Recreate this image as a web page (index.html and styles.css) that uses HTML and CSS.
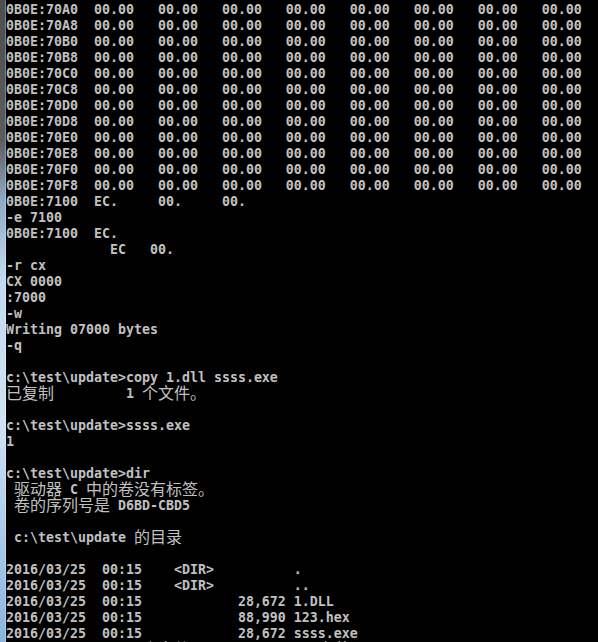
FILE: index.html
```html
<!DOCTYPE html>
<html lang="zh-CN">
<head>
<meta charset="utf-8">
<title>C:\Windows\system32\cmd.exe</title>
<link rel="stylesheet" href="styles.css">
</head>
<body>
<div class="window">
<div class="frame"></div>
<pre class="console">0B0E:70A0  00.00   00.00   00.00   00.00   00.00   00.00   00.00   00.00
0B0E:70A8  00.00   00.00   00.00   00.00   00.00   00.00   00.00   00.00
0B0E:70B0  00.00   00.00   00.00   00.00   00.00   00.00   00.00   00.00
0B0E:70B8  00.00   00.00   00.00   00.00   00.00   00.00   00.00   00.00
0B0E:70C0  00.00   00.00   00.00   00.00   00.00   00.00   00.00   00.00
0B0E:70C8  00.00   00.00   00.00   00.00   00.00   00.00   00.00   00.00
0B0E:70D0  00.00   00.00   00.00   00.00   00.00   00.00   00.00   00.00
0B0E:70D8  00.00   00.00   00.00   00.00   00.00   00.00   00.00   00.00
0B0E:70E0  00.00   00.00   00.00   00.00   00.00   00.00   00.00   00.00
0B0E:70E8  00.00   00.00   00.00   00.00   00.00   00.00   00.00   00.00
0B0E:70F0  00.00   00.00   00.00   00.00   00.00   00.00   00.00   00.00
0B0E:70F8  00.00   00.00   00.00   00.00   00.00   00.00   00.00   00.00
0B0E:7100  EC.     00.     00.
-e 7100
0B0E:7100  EC.
             EC   00.
-r cx
CX 0000
:7000
-w
Writing 07000 bytes
-q

c:\test\update&gt;copy 1.dll ssss.exe
<span class="cjk">已复制</span>         1 <span class="cjk">个文件。</span>

c:\test\update&gt;ssss.exe
1

c:\test\update&gt;dir
 <span class="cjk">驱动器</span> C <span class="cjk">中的卷没有标签。</span>
 <span class="cjk">卷的序列号是</span> D6BD-CBD5

 c:\test\update <span class="cjk">的目录</span>

2016/03/25  00:15    &lt;DIR&gt;          .
2016/03/25  00:15    &lt;DIR&gt;          ..
2016/03/25  00:15            28,672 1.DLL
2016/03/25  00:15            88,990 123.hex
2016/03/25  00:15            28,672 ssss.exe
               3 <span class="cjk">个文件</span>        146,334 <span class="cjk">字节</span>
</pre>
</div>
</body>
</html>
```
FILE: styles.css
```css
html, body {
  margin: 0;
  padding: 0;
  background: #000;
  height: 642px;
  overflow: hidden;
}

.window {
  display: flex;
  height: 642px;
  background: #000;
}

.frame {
  flex: 0 0 6px;
  background: linear-gradient(to bottom,
    #4e4e4e 0px,
    #5c5c5c 140px,
    #8fa9c4 200px,
    #c4daf0 280px,
    #cfe2f5 420px,
    #a9c8e8 540px,
    #8ab4de 642px);
  box-shadow: inset -1px 0 0 rgba(255, 255, 255, 0.25);
}

.console {
  flex: 1;
  margin: 0;
  padding: 2px 0 0 0;
  color: #c0c0c0;
  font-family: "DejaVu Sans Mono", "Liberation Mono", monospace;
  font-weight: bold;
  font-size: 13.29px;
  line-height: 16px;
  white-space: pre;
  overflow: hidden;
}

.cjk {
  font-family: "Noto Sans CJK SC", "Noto Sans CJK TC", sans-serif;
  font-weight: normal;
  font-size: 16px;
  line-height: 0;
  vertical-align: -1px;
}
```
